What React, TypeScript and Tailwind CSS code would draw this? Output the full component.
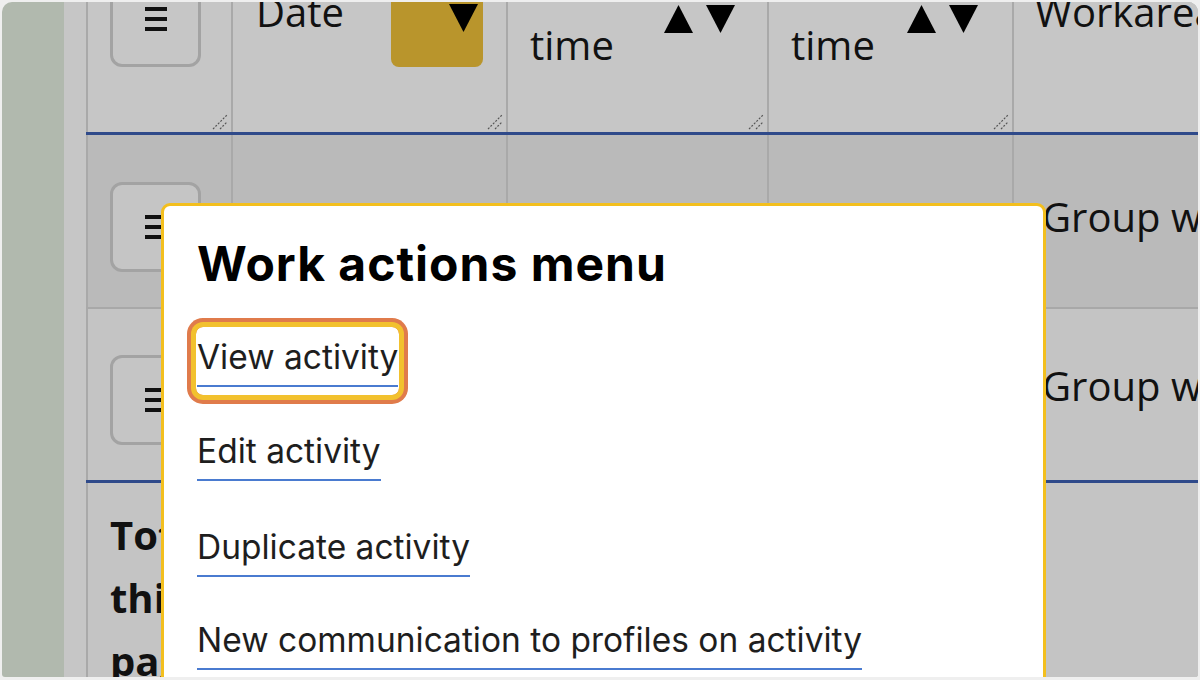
const tableFont = { fontFamily: '"Open Sans", "Liberation Sans", sans-serif' };
const menuFont = { fontFamily: 'Inter, "Noto Sans", sans-serif' };

function Bars() {
  return (
    <div className="flex flex-col gap-[6px]">
      <div className="w-[22px] h-[4px] bg-[#111]" />
      <div className="w-[22px] h-[4px] bg-[#111]" />
      <div className="w-[22px] h-[4px] bg-[#111]" />
    </div>
  );
}

function Tri({ up }: { up?: boolean }) {
  return (
    <svg width="29" height="28" viewBox="0 0 29 28">
      {up ? <polygon points="14.5,0 29,28 0,28" fill="#000" /> : <polygon points="0,0 29,0 14.5,28" fill="#000" />}
    </svg>
  );
}

function Grip() {
  return (
    <svg className="absolute right-[3px] bottom-[2px]" width="16" height="16" viewBox="0 0 16 16">
      <line x1="1" y1="15" x2="15" y2="1" stroke="#555" strokeWidth="1.2" strokeDasharray="2 1.5" />
      <line x1="8" y1="15" x2="15" y2="8" stroke="#555" strokeWidth="1.2" strokeDasharray="2 1.5" />
    </svg>
  );
}

function RowButton({ top }: { top: string }) {
  return (
    <div className={`pl-[22px] ${top}`}>
      <div className="w-[91px] h-[90px] border-[3px] border-[#a3a3a3] rounded-[12px] bg-[#c5c5c5] flex items-center justify-center">
        <Bars />
      </div>
    </div>
  );
}

function Menu() {
  const items = [
    { label: "Edit activity", mt: "mt-[44px]" },
    { label: "Duplicate activity", mt: "mt-[46px]" },
    { label: "New communication to profiles on activity", mt: "mt-[43px]" },
  ];
  return (
    <div
      className="absolute left-[159px] top-[201px] w-[885px] h-[600px] bg-white border-[3px] border-[#f3bf1e] rounded-[9px] pl-[33px] pt-[30px] text-[#1e1e1e]"
      style={menuFont}
    >
      <h2 className="text-[48px] leading-[56px] font-bold tracking-[1px] text-black">Work actions menu</h2>
      <div className="mt-[45px]">
        <span className="inline-block -mx-[1px] px-[1px] -mt-[10px] pt-[10px] -mb-[8px] pb-[8px] rounded-[7px] shadow-[0_0_0_5px_#f2c12e,0_0_0_9px_#e07b4b]">
          <a className="inline-block text-[33.5px] leading-[40px] pb-[8px] border-b-2 border-[#4a7bd0]">View activity</a>
        </span>
      </div>
      {items.map((it) => (
        <div key={it.label} className={it.mt}>
          <a className="inline-block text-[33.5px] leading-[40px] pb-[8px] border-b-2 border-[#4a7bd0]">{it.label}</a>
        </div>
      ))}
    </div>
  );
}

export default function App() {
  return (
    <div className="w-[1200px] h-[680px] bg-[#efefef] pt-[2px] px-[2px] pb-[3px] overflow-hidden">
      <div className="relative w-full h-full rounded-t-[10px] rounded-b-[3px] overflow-hidden bg-[#b1b9ae] flex">
        <div className="w-[62px] shrink-0" />
        <div className="flex-1 bg-[#c6c6c6] pl-[22px] overflow-hidden" style={tableFont}>
          <div className="-mt-[60px] w-[1200px] text-[40px] text-[#111]">
            {/* header */}
            <div className="grid grid-cols-[145px_275px_261px_245px_1fr] h-[193px] border-b-[3px] border-[#2f4a8a] bg-[#c6c6c6]">
              <div className="relative border-l-2 border-[#a9a9a9] pl-[22px] pt-[35px]">
                <div className="w-[91px] h-[90px] border-[3px] border-[#a3a3a3] rounded-[12px] flex items-center justify-center pb-[6px]">
                  <Bars />
                </div>
                <Grip />
              </div>
              <div className="relative border-l-2 border-[#a9a9a9] pl-[23px] pr-[23px] flex items-start">
                <span className="mt-[40px] leading-[60px]">Date</span>
                <div className="ml-auto mt-[35px] w-[92px] h-[90px] rounded-[8px] bg-[#b9952c] flex items-center justify-end pr-[5px] pb-[8px]">
                  <Tri />
                </div>
                <Grip />
              </div>
              <div className="relative border-l-2 border-[#a9a9a9] pl-[22px] pr-[32px] flex items-start">
                <span className="mt-[13px] w-[110px] leading-[60px]">Start time</span>
                <div className="ml-auto mt-[63px] flex gap-[13px]">
                  <Tri up />
                  <Tri />
                </div>
                <Grip />
              </div>
              <div className="relative border-l-2 border-[#a9a9a9] pl-[22px] pr-[34px] flex items-start">
                <span className="mt-[13px] w-[110px] leading-[60px]">End time</span>
                <div className="ml-auto mt-[63px] flex gap-[13px]">
                  <Tri up />
                  <Tri />
                </div>
                <Grip />
              </div>
              <div className="relative border-l-2 border-[#a9a9a9] pl-[21px]">
                <div className="mt-[40px] leading-[60px] whitespace-nowrap">Workarea</div>
              </div>
            </div>

            {/* row 1 */}
            <div className="grid grid-cols-[145px_275px_261px_245px_1fr] h-[174px] border-b-2 border-[#a8a8a8] bg-[#bababa]">
              <div className="border-l-2 border-[#a9a9a9]">
                <RowButton top="pt-[47px]" />
              </div>
              <div className="border-l-2 border-[#a9a9a9] pl-[23px]">
                <div className="mt-[52px] leading-[60px] whitespace-nowrap">Mon 6 Jan</div>
              </div>
              <div className="border-l-2 border-[#a9a9a9] pl-[22px]">
                <div className="mt-[52px] leading-[60px]">09:00</div>
              </div>
              <div className="border-l-2 border-[#a9a9a9] pl-[22px]">
                <div className="mt-[52px] leading-[60px]">11:00</div>
              </div>
              <div className="border-l-2 border-[#a9a9a9] pl-[28px]">
                <div className="mt-[52px] leading-[60px] whitespace-nowrap">Group work</div>
              </div>
            </div>

            {/* row 2 */}
            <div className="grid grid-cols-[145px_275px_261px_245px_1fr] h-[174px] border-b-[3px] border-[#2f4a8a] bg-[#c4c4c4]">
              <div className="border-l-2 border-[#a9a9a9]">
                <RowButton top="pt-[46px]" />
              </div>
              <div className="border-l-2 border-[#a9a9a9] pl-[23px]">
                <div className="mt-[47px] leading-[60px] whitespace-nowrap">Tue 7 Jan</div>
              </div>
              <div className="border-l-2 border-[#a9a9a9] pl-[22px]">
                <div className="mt-[47px] leading-[60px]">13:00</div>
              </div>
              <div className="border-l-2 border-[#a9a9a9] pl-[22px]">
                <div className="mt-[47px] leading-[60px]">15:30</div>
              </div>
              <div className="border-l-2 border-[#a9a9a9] pl-[28px]">
                <div className="mt-[47px] leading-[60px] whitespace-nowrap">Group work</div>
              </div>
            </div>

            {/* footer */}
            <div className="grid grid-cols-[145px_1fr] h-[260px] bg-[#c4c4c4]">
              <div className="border-l-2 border-[#a9a9a9] pl-[22px] pr-[20px] pt-[20px]">
                <div className="font-bold leading-[63px]">Totals this page</div>
              </div>
              <div />
            </div>
          </div>
        </div>
        <Menu />
      </div>
    </div>
  );
}
